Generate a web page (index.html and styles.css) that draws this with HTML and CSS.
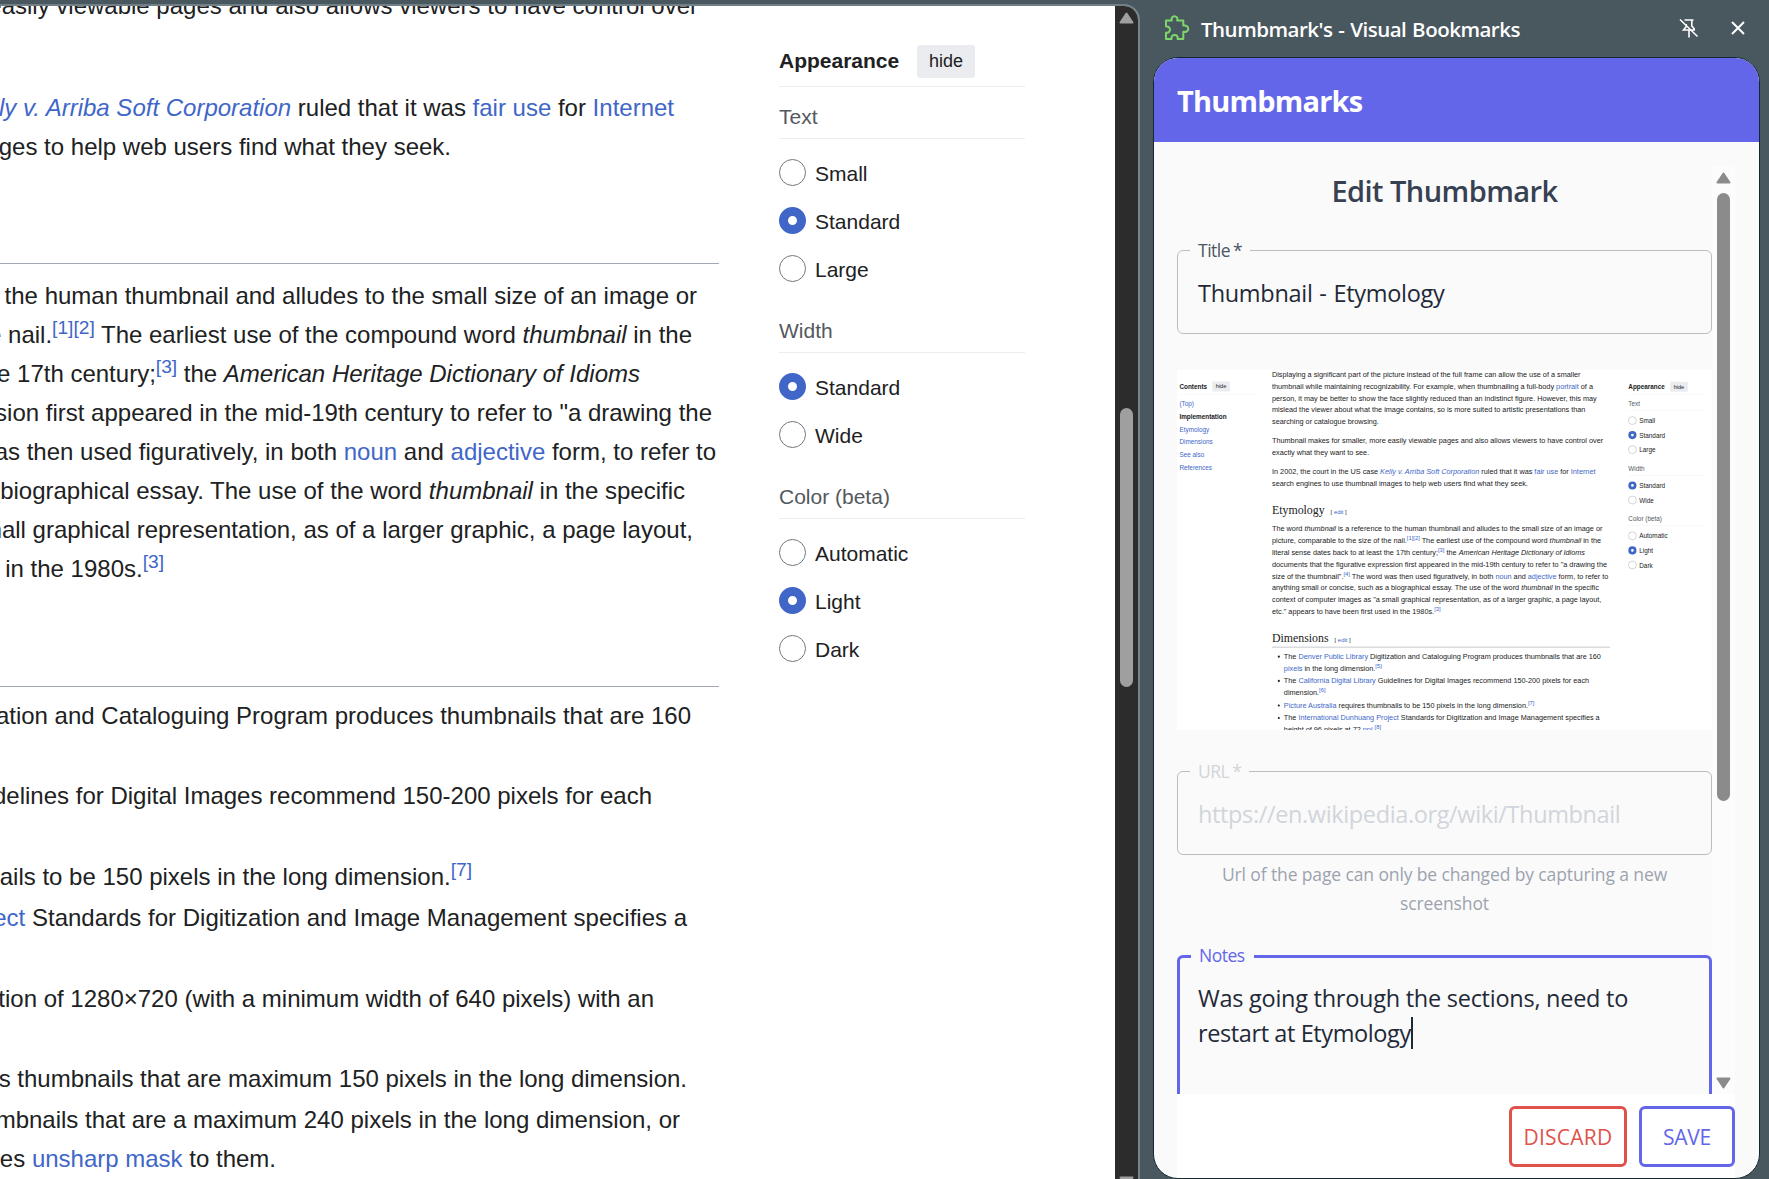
FILE: index.html
```html
<!DOCTYPE html>
<html lang="en">
<head>
<meta charset="utf-8">
<title>Thumbnail - Wikipedia</title>
<link rel="stylesheet" href="styles.css">
</head>
<body>
<div class="window">
  <main class="page">
    <article class="article">
      <div class="line" style="width:698px"><span>easily viewable pages and also allows viewers to have control over</span></div>
      <div class="line end"></div>
      <div class="line" style="width:674px"><span><a class="it">Kelly v. Arriba Soft Corporation</a> ruled that it was <a>fair use</a> for <a>Internet</a></span></div>
      <div class="line" style="width:451px"><span>images to help web users find what they seek.</span></div>
      <div class="rule first"></div>
      <div class="line" style="width:697px"><span>the human thumbnail and alludes to the small size of an image or</span></div>
      <div class="line" style="width:692px"><span>the nail.<sup>[1][2]</sup> The earliest use of the compound word <i>thumbnail</i> in the</span></div>
      <div class="line" style="width:640px"><span>the 17th century;<sup>[3]</sup> the <i>American Heritage Dictionary of Idioms</i></span></div>
      <div class="line" style="width:712px"><span>expression first appeared in the mid-19th century to refer to "a drawing the</span></div>
      <div class="line" style="width:716px"><span>was then used figuratively, in both <a>noun</a> and <a>adjective</a> form, to refer to</span></div>
      <div class="line" style="width:685px"><span>biographical essay. The use of the word <i>thumbnail</i> in the specific</span></div>
      <div class="line" style="width:693px"><span>small graphical representation, as of a larger graphic, a page layout,</span></div>
      <div class="line" style="width:164px"><span>in the 1980s.<sup>[3]</sup></span></div>
      <div class="rule second"></div>
      <div class="item"><div class="line" style="width:691px"><span>Digitization and Cataloguing Program produces thumbnails that are 160</span></div><div class="line"></div></div>
      <div class="item"><div class="line" style="width:652px"><span>Guidelines for Digital Images recommend 150-200 pixels for each</span></div><div class="line"></div></div>
      <div class="item"><div class="line" style="width:472px"><span>thumbnails to be 150 pixels in the long dimension.<sup>[7]</sup></span></div></div>
      <div class="item"><div class="line" style="width:687px"><span><a>Project</a> Standards for Digitization and Image Management specifies a</span></div><div class="line"></div></div>
      <div class="item"><div class="line" style="width:654px"><span>resolution of 1280×720 (with a minimum width of 640 pixels) with an</span></div><div class="line"></div></div>
      <div class="item"><div class="line" style="width:687px"><span>produces thumbnails that are maximum 150 pixels in the long dimension.</span></div></div>
      <div class="item"><div class="line" style="width:680px"><span>thumbnails that are a maximum 240 pixels in the long dimension, or</span></div>
      <div class="line" style="width:276px"><span>applies <a>unsharp mask</a> to them.</span></div></div>
    </article>
    <aside class="appearance">
      <header><b>Appearance</b><span class="hide">hide</span></header>
      <h4>Text</h4>
      <ul><li><i class="radio"></i><span>Small</span></li><li><i class="radio on"></i><span>Standard</span></li><li><i class="radio"></i><span>Large</span></li></ul>
      <h4>Width</h4>
      <ul><li><i class="radio on"></i><span>Standard</span></li><li><i class="radio"></i><span>Wide</span></li></ul>
      <h4>Color (beta)</h4>
      <ul><li><i class="radio"></i><span>Automatic</span></li><li><i class="radio on"></i><span>Light</span></li><li><i class="radio"></i><span>Dark</span></li></ul>
    </aside>
    <div class="scrollbar dark">
      <svg class="up" width="15" height="12" viewBox="0 0 15 12"><path d="M7.500 1.500 13.500 10.500H1.500Z" fill="#9f9f9f" stroke="#9f9f9f" stroke-width="2" stroke-linejoin="round"/></svg>
      <div class="thumb"></div>
      <svg class="down" width="15" height="12" viewBox="0 0 15 12"><path d="M7.500 10.500 13.500 1.500H1.500Z" fill="#9f9f9f" stroke="#9f9f9f" stroke-width="2" stroke-linejoin="round"/></svg>
    </div>
  </main>

  <section class="side">
    <header class="side-bar">
      <svg width="26" height="26" viewBox="0 0 26 26" fill="none" stroke="#7ed66b" stroke-width="2" stroke-linejoin="round"><path d="M2 5.500H7.800C6.900 2.900 8.500 1.300 10.500 1.300S14.100 2.900 13.200 5.500H19.300V10.600C22 9.800 24.300 11.600 24.300 13.700S22 17.600 19.300 16.800V24H13.600C14.200 21.300 12.500 20 10.600 20S7 21.300 7.600 24H2V17.700C4.600 18.200 6 16.500 6 14.600S4.600 11 2 11.500Z"/></svg>
      <span class="side-title">Thumbmark's - Visual Bookmarks</span>
      <svg class="pin" width="20" height="20" viewBox="0 0 20 20" fill="none" stroke="#fff" stroke-width="1.600"><path d="M5.500 2H14.500M12.800 2V8L15.200 10.800V12H4.500L7.300 8.500V6M10 12V19.500M1 1.500 18.500 18.500"/></svg>
      <svg width="14" height="14" viewBox="0 0 14 14" fill="none" stroke="#fff" stroke-width="2"><path d="M1 1 13 13M13 1 1 13"/></svg>
    </header>
    <div class="panel">
      <h1>Thumbmarks</h1>
      <div class="body">
        <div class="form">
          <h2>Edit Thumbmark</h2>
          <fieldset class="title-field"><legend>Title<span class="star">*</span></legend><div class="value">Thumbnail - Etymology</div></fieldset>
          <div class="shot"><div class="shot-page">
            <nav class="contents">
              <header><b>Contents</b><span class="hide">hide</span></header>
              <div><a>(Top)</a></div><div><b>Implementation</b></div><div><a>Etymology</a></div><div><a>Dimensions</a></div><div><a>See also</a></div><div><a>References</a></div>
            </nav>
            <div class="text">
              <p>Displaying a significant part of the picture instead of the full frame can allow the use of a smaller<br>thumbnail while maintaining recognizability. For example, when thumbnailing a full-body <a>portrait</a> of a<br>person, it may be better to show the face slightly reduced than an indistinct figure. However, this may<br>mislead the viewer about what the image contains, so is more suited to artistic presentations than<br>searching or catalogue browsing.</p>
              <p>Thumbnail makes for smaller, more easily viewable pages and also allows viewers to have control over<br>exactly what they want to see.</p>
              <p>In 2002, the court in the US case <a class="it">Kelly v. Arriba Soft Corporation</a> ruled that it was <a>fair use</a> for <a>Internet</a><br>search engines to use thumbnail images to help web users find what they seek.</p>
              <h3>Etymology <small>[ <a>edit</a> ]</small></h3>
              <p>The word <i>thumbnail</i> is a reference to the human thumbnail and alludes to the small size of an image or<br>picture, comparable to the size of the nail.<sup>[1][2]</sup> The earliest use of the compound word <i>thumbnail</i> in the<br>literal sense dates back to at least the 17th century;<sup>[3]</sup> the <i>American Heritage Dictionary of Idioms</i><br>documents that the figurative expression first appeared in the mid-19th century to refer to "a drawing the<br>size of the thumbnail".<sup>[4]</sup> The word was then used figuratively, in both <a>noun</a> and <a>adjective</a> form, to refer to<br>anything small or concise, such as a biographical essay. The use of the word <i>thumbnail</i> in the specific<br>context of computer images as "a small graphical representation, as of a larger graphic, a page layout,<br>etc." appears to have been first used in the 1980s.<sup>[3]</sup></p>
              <h3 class="dim">Dimensions <small>[ <a>edit</a> ]</small></h3>
              <ul>
                <li>The <a>Denver Public Library</a> Digitization and Cataloguing Program produces thumbnails that are 160<br><a>pixels</a> in the long dimension.<sup>[5]</sup></li>
                <li>The <a>California Digital Library</a> Guidelines for Digital Images recommend 150-200 pixels for each<br>dimension.<sup>[6]</sup></li>
                <li><a>Picture Australia</a> requires thumbnails to be 150 pixels in the long dimension.<sup>[7]</sup></li>
                <li>The <a>International Dunhuang Project</a> Standards for Digitization and Image Management specifies a<br>height of 96 pixels at 72 <a>ppi</a>.<sup>[8]</sup></li>
              </ul>
            </div>
            <aside class="appearance">
              <header><b>Appearance</b><span class="hide">hide</span></header>
              <h4>Text</h4>
              <ul><li><i class="radio"></i><span>Small</span></li><li><i class="radio on"></i><span>Standard</span></li><li><i class="radio"></i><span>Large</span></li></ul>
              <h4>Width</h4>
              <ul><li><i class="radio on"></i><span>Standard</span></li><li><i class="radio"></i><span>Wide</span></li></ul>
              <h4>Color (beta)</h4>
              <ul><li><i class="radio"></i><span>Automatic</span></li><li><i class="radio on"></i><span>Light</span></li><li><i class="radio"></i><span>Dark</span></li></ul>
            </aside>
          </div></div>
          <fieldset class="url-field"><legend>URL<span class="star">*</span></legend><div class="value">https://en.wikipedia.org/wiki/Thumbnail</div></fieldset>
          <p class="help">Url of the page can only be changed by capturing a new<br>screenshot</p>
          <fieldset class="notes-field"><legend>Notes</legend><div class="value">Was going through the sections, need to<br><span class="last">restart at Etymology</span><span class="caret"></span></div></fieldset>
        </div>
        <div class="scrollbar light">
          <svg class="up" width="15" height="12" viewBox="0 0 15 12"><path d="M7.500 1.500 13.500 10.500H1.500Z" fill="#8b8b8b" stroke="#8b8b8b" stroke-width="2" stroke-linejoin="round"/></svg>
          <div class="thumb"></div>
          <svg class="down" width="15" height="12" viewBox="0 0 15 12"><path d="M7.500 10.500 13.500 1.500H1.500Z" fill="#8b8b8b" stroke="#8b8b8b" stroke-width="2" stroke-linejoin="round"/></svg>
        </div>
      </div>
      <footer><button class="discard">DISCARD</button><button class="save">SAVE</button></footer>
    </div>
  </section>
</div>
</body>
</html>
```
FILE: styles.css
```css
* { box-sizing: border-box; }
body { margin: 0; background: #49575f; overflow: hidden; }
h1, h2, h3, h4, p, ul, fieldset { margin: 0; padding: 0; }
ul { list-style: none; }
svg { display: block; flex: none; }
a { color: #4066c8; }
a.it { font-style: italic; }

.window { display: flex; height: 1179px; overflow: hidden; }

/* browser page */
.page {
  display: flex; width: 1140px; height: 1183px; margin-top: 4px; flex: none;
  border-top: 2px solid #717f87; border-right: 2px solid #76848c;
  border-top-right-radius: 16px; background: #fff; overflow: hidden;
  font-family: "Liberation Sans", Arial, sans-serif; color: #202122;
}
.article { width: 719px; margin-top: -20px; flex: none; font-size: 24px; }
.line {
  display: flex; justify-content: flex-end; height: 39px; line-height: 39px;
  white-space: nowrap;
}
.line.end { margin-bottom: 24px; }
.line > span { flex: none; }
sup { font-size: 19.2px; line-height: 1px; color: #4066c8; vertical-align: super; }
.rule { border-bottom: 1px solid #a2a9b1; }
.rule.first { height: 98px; margin-bottom: 12px; }
.rule.second { height: 99px; margin-bottom: 9px; }
.item { margin-bottom: 2.4px; }

.appearance { width: 246px; margin-left: 60px; flex: none; font-size: 21px; color: #202122; }
.appearance header, .contents header {
  display: flex; align-items: center; height: 81px; padding-top: 29px;
  border-bottom: 1px solid #eaecf0;
}
.appearance header b { width: 138px; }
.hide {
  height: 33px; width: 58px; border-radius: 3px; background: #eaecf0;
  font-size: 18px; line-height: 33px; text-align: center;
}
.appearance .hide { margin-top: 1px; }
.appearance h4 {
  height: 52px; padding-top: 5px; line-height: 49px; font-weight: 400; font-size: 21px;
  color: #54595d; border-bottom: 1px solid #eaecf0;
}
.appearance ul { padding: 9.5px 0 8.5px; }
.appearance li { display: flex; align-items: center; height: 48px; gap: 9px; }
.appearance li span { padding-top: 2px; }
.radio { width: 27px; height: 27px; border: 1px solid #72777d; border-radius: 50%; background: #fff; }
.radio.on { border: 9px solid #4066c8; }

.scrollbar { display: flex; flex-direction: column; align-items: center; width: 23px; }
.scrollbar.dark { margin-left: auto; height: 1179px; background: #2c2c2c; padding-top: 6px; }
.thumb { width: 13px; border-radius: 7px; flex: none; }
.dark .thumb { height: 279px; margin-top: 384px; background: #9f9f9f; }
.dark .down { margin-top: 489px; }

/* extension side panel */
.side {
  flex: 1; padding: 0 9px 0 13px;
  font-family: "Open Sans", "Noto Sans", sans-serif;
}
.side-bar { display: flex; align-items: center; height: 57px; padding: 0 15px 2px 11px; color: #fff; }
.side-title {
  flex: 1; margin-left: 11px; padding-top: 2px; font-size: 20.5px; font-weight: 600;
  letter-spacing: -.5px; word-spacing: 1px; white-space: nowrap;
}
.pin { margin-right: 32px; }
.panel {
  display: flex; flex-direction: column; height: 1122px; border: 1px solid #14262f;
  border-radius: 25px; background: #fafafa; overflow: hidden;
}
.panel h1 {
  height: 84px; padding-left: 23px; background: #6366e9; color: #fff;
  font-size: 29px; line-height: 86px; font-weight: 700; letter-spacing: -.8px; flex: none;
}
.body { display: flex; height: 928px; margin: 24px 0 0 23px; overflow: hidden; flex: none; }
.form { width: 535px; }
.form h2 {
  height: 48px; line-height: 50px; text-align: center; font-size: 29px; font-weight: 600;
  color: #374151; letter-spacing: -.55px;
}
fieldset { height: 96px; min-width: 0; border: 1px solid #bdbdbd; border-radius: 6px; }
legend {
  height: 24px; margin-left: 12px; padding: 0 8px; font-size: 17.5px; line-height: 24px;
  letter-spacing: -.5px; color: #4b5563;
}
.star { margin-left: 3px; }
.value {
  padding: 14px 0 0 20px; font-size: 23.5px; line-height: 35px; color: #1f2937;
  letter-spacing: -.3px; white-space: nowrap;
}
.title-field { margin-top: 24px; }
.title-field .value { word-spacing: 1px; }
.url-field { margin-top: 29px; }
.url-field legend, .url-field .value { color: #d1d5db; }
.url-field .value { letter-spacing: -.37px; }
.help {
  margin-top: 5px; font-size: 17.5px; line-height: 29px; text-align: center;
  color: #9ca3af; letter-spacing: -.12px;
}
.notes-field { height: 220px; margin-top: 26px; border: 3px solid #6366e9; }
.notes-field legend { margin-left: 11px; padding-right: 9px; color: #6366e9; line-height: 23px; }
.notes-field .value { padding: 13px 0 0 18px; letter-spacing: -.26px; }
.last { letter-spacing: -.4px; }
.caret { display: inline-block; width: 2px; height: 32px; background: #1f2937; vertical-align: -7px; }

.scrollbar.light { background: #fcfcfc; padding-top: 6px; }
.light .thumb { height: 608px; margin-top: 9px; background: #8b8b8b; }
.light .down { margin-top: 276px; }

footer {
  display: flex; justify-content: flex-end; gap: 12px; width: 558px; height: 84px;
  margin-left: 23px; padding-top: 12px; background: #fff; flex: none;
}
button {
  height: 61px; padding: 0; border: 3px solid; border-radius: 6px; background: #fff;
  font-family: inherit; font-size: 21px; font-weight: 500;
}
.discard { width: 118px; color: #df524b; letter-spacing: .25px; }
.save { width: 96px; color: #6366e9; letter-spacing: -.3px; }

/* captured page preview: a full-size page scaled down */
.shot { height: 360px; margin-top: 36px; background: #fff; overflow: hidden; }
.shot-page {
  display: flex; width: 1763px; height: 1186px; transform: scale(.3035);
  transform-origin: 0 0; font-family: "Liberation Sans", Arial, sans-serif; color: #202122;
}
.contents { width: 246px; margin-left: 8px; flex: none; font-size: 21px; }
.contents header { margin-bottom: 10px; }
.contents header b { width: 108px; }
.contents div { height: 42px; line-height: 42px; }
.text { width: 1114px; margin: -5px 0 0 59px; flex: none; font-size: 24px; line-height: 39px; white-space: nowrap; }
.text p { margin-bottom: 24px; }
.text h3 {
  height: 109px; margin-top: -24px; padding-top: 42px; font-family: "Liberation Serif", serif;
  font-weight: 400; font-size: 39px; line-height: 52px;
}
.text h3 small { margin-left: 10px; font-family: "Liberation Sans", sans-serif; font-size: 19.5px; }
.text h3.dim { height: 99px; margin-bottom: 10px; padding-top: 42px; border-bottom: 2px solid #a2a9b1; }
.text li { position: relative; margin: 0 0 2.4px 39px; }
.text li::before { content: ""; position: absolute; left: -20px; top: 17px; width: 7px; height: 7px; border-radius: 50%; background: #202122; }
```
